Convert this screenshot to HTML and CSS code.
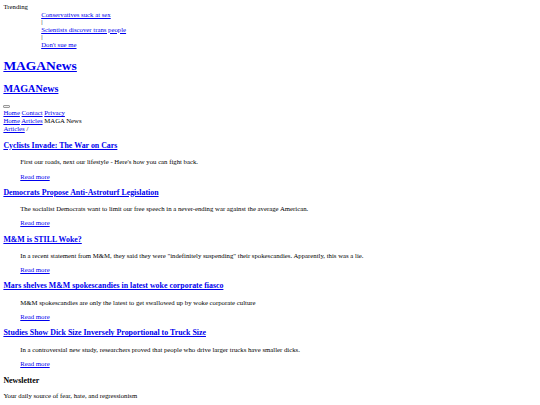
FILE: index.html
```html
<!DOCTYPE html>
<html lang="en">
<head>
    <meta charset="UTF-8">
    <meta name="viewport" content="width=device-width, initial-scale=1.0">
    <title>MAGANews</title>
    <link rel="stylesheet" href="styles.css">
</head>
<body>
    <div class="trending">
        <span>Trending</span>
        <ul class="ticker">
            <li><a href="#">Conservatives suck at sex</a></li>
            <li>|</li>
            <li><a href="#">Scientists discover trans people</a></li>
            <li>|</li>
            <li><a href="#">Don't sue me</a></li>
        </ul>
    </div>

    <header>
        <h1><a href="#">MAGANews</a></h1>
        <h2><a href="#">MAGANews</a></h2>
        <button class="menu-toggle"></button>
        <nav>
            <a href="#">Home</a> <a href="#">Contact</a> <a href="#">Privacy</a>
        </nav>
        <div class="crumbs">
            <a href="#">Home</a> <a href="#">Articles</a> MAGA News
        </div>
        <div class="crumbs">
            <a href="#">Articles</a> /
        </div>
    </header>

    <main id="articles">
        <!-- Artikel -->
        <article class="post">
            <h3><a href="#">Cyclists Invade: The War on Cars</a></h3>
            <div class="summary">
                <p>First our roads, next our lifestyle - Here's how you can fight back.</p>
                <p><a href="#">Read more</a></p>
            </div>
        </article>
        <article class="post">
            <h3><a href="#">Democrats Propose Anti-Astroturf Legislation</a></h3>
            <div class="summary">
                <p>The socialist Democrats want to limit our free speech in a never-ending war against the average American.</p>
                <p><a href="#">Read more</a></p>
            </div>
        </article>
        <article class="post">
            <h3><a href="#">M&amp;M is STILL Woke?</a></h3>
            <div class="summary">
                <p>In a recent statement from M&amp;M, they said they were "indefinitely suspending" their spokescandies. Apparently, this was a lie.</p>
                <p><a href="#">Read more</a></p>
            </div>
        </article>
        <article class="post">
            <h3><a href="#">Mars shelves M&amp;M spokescandies in latest woke corporate fiasco</a></h3>
            <div class="summary">
                <p>M&amp;M spokescandies are only the latest to get swallowed up by woke corporate culture</p>
                <p><a href="#">Read more</a></p>
            </div>
        </article>
        <article class="post">
            <h3><a href="#">Studies Show Dick Size Inversely Proportional to Truck Size</a></h3>
            <div class="summary">
                <p>In a controversial new study, researchers proved that people who drive larger trucks have smaller dicks.</p>
                <p><a href="#">Read more</a></p>
            </div>
        </article>
    </main>

    <footer>
        <h3>Newsletter</h3>
        <p>Your daily source of fear, hate, and regressionism</p>
    </footer>
</body>
</html>
```

FILE: styles.css
```css
body {
    font-family: "Liberation Serif", "Times New Roman", serif;
    font-size: 6.75px;
    line-height: 1.15;
    margin: 0.5em;
    color: #000;
}
a {
    color: #0000ee;
}
.trending {
    line-height: 7.45px;
}
.ticker {
    list-style: none;
    margin: 0;
    padding-left: 5.6em;
}
h1 {
    font-size: 2em;
    margin: 10px 0 9px;
}
h2 {
    font-size: 1.5em;
    margin: 0.83em 0;
}
h3 {
    font-size: 1.17em;
    margin: 7.4px 0 8.4px;
}
p {
    margin: 1em 0;
}
.menu-toggle {
    display: block;
    width: 7px;
    height: 3px;
    margin: 11px 0 1px;
    padding: 0;
    border: 1px solid #999;
    border-radius: 1px;
    background: #efefef;
}
.post:first-child h3 {
    margin-top: 8.4px;
}
.summary {
    margin-left: 2.5em;
}
.summary p {
    margin: 6.5px 0;
}
footer h3 {
    margin: 8.4px 0 6.4px;
}
footer p {
    margin: 6.4px 0;
}
```
